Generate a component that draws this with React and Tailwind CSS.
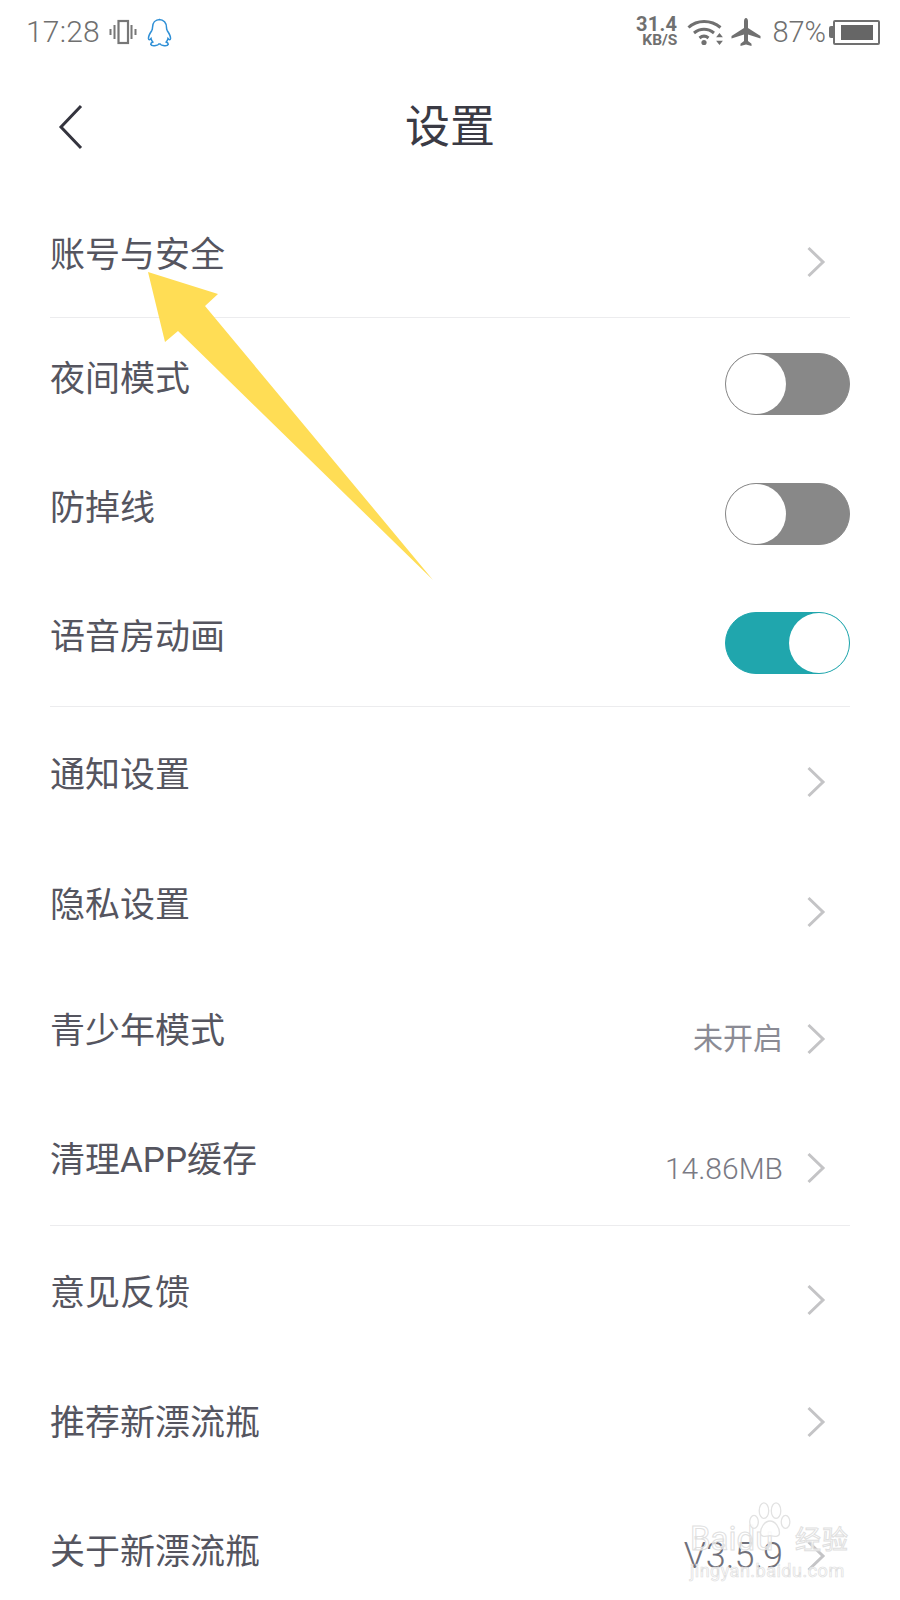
const FONT = "font-['Roboto','Noto_Sans_CJK_SC',sans-serif]";

const Chevron = () => (
  <svg width="20" height="32" viewBox="0 0 20 32" fill="none">
    <path d="M2.500 2 L17 16 L2.500 30" stroke="#c4c4c6" strokeWidth="3" />
  </svg>
);

const Toggle = ({ on }) => (
  <div
    className={
      "flex h-[62px] w-[125px] rounded-full border " +
      (on ? "justify-end bg-[#20a6ad] border-[#20a6ad]" : "justify-start bg-[#888888] border-[#888888]")
    }
  >
    <div className="h-[60px] w-[60px] rounded-full bg-white" />
  </div>
);

const Row = ({
  label,
  value,
  valueClass = "text-[30px] text-[#8b8b94]",
  toggle,
  toggleShift = "mt-[3px]",
  h,
  labelShift = "mb-[2px]",
  chevronShift = "mt-[18px]",
}) => (
  <div className={"flex items-center justify-between " + h}>
    <span className={"text-[35px] leading-none text-[#55555f] " + labelShift}>{label}</span>
    {toggle !== undefined ? (
      <div className={toggleShift}><Toggle on={toggle} /></div>
    ) : (
      <div className={"flex items-center gap-[23px] pr-[24px] " + chevronShift}>
        {value && <span className={valueClass}>{value}</span>}
        <Chevron />
      </div>
    )}
  </div>
);

const Divider = () => <div className="h-[1px] bg-[#ececee]" />;

const StatusBar = () => (
  <div className="flex h-[64px] items-center justify-between pl-[26px] pr-[20px] text-[#707070]">
    <div className="flex items-center">
      <span className="text-[30px] font-light leading-none tracking-[0.2px]">17:28</span>
      {/* vibrate */}
      <svg width="28" height="26" viewBox="0 0 28 26" className="ml-[9px]" fill="none" stroke="#777777">
        <rect x="9.500" y="2" width="9.500" height="22" strokeWidth="2.200" />
        <path d="M5.500 6v14M22.500 6v14" strokeWidth="2" />
        <path d="M1.500 10v6M26.500 10v6" strokeWidth="2" />
      </svg>
      {/* qq */}
      <svg width="26" height="29" viewBox="0 0 26 29" className="ml-[10px]" fill="none" stroke="#2e8fd6" strokeWidth="1.500">
        <path d="M13 1.500c-4.800 0-7.500 3.400-7.500 8 0 1.300-.2 2.200-.8 3.200-1.800 2.600-3.500 5.500-3.200 8 .2 1.300 1.200 1.300 2.500-.2.300 1.500 1 2.700 1.800 3.500-1.500.7-2.300 1.500-2 2.600.4 1.100 3 1.300 5 1 1.500-.2 2.700-1 3-1.600h1.400c.3.600 1.500 1.400 3 1.600 2 .3 4.600.1 5-1 .3-1.100-.5-1.900-2-2.600.8-.8 1.500-2 1.800-3.500 1.300 1.500 2.300 1.500 2.500.2.300-2.500-1.400-5.400-3.200-8-.6-1-.8-1.900-.8-3.200 0-4.600-2.700-8-7.500-8z" />
      </svg>
    </div>
    <div className="flex items-center">
      <div className="flex flex-col items-end font-bold text-[#707070]">
        <span className="text-[20px] leading-[17px] tracking-[0.3px]">31.4</span>
        <span className="text-[15.500px] leading-[15px]">KB/S</span>
      </div>
      {/* wifi */}
      <svg width="37" height="28" viewBox="0 0 37 28" className="ml-[10px]" fill="none" stroke="#707070" strokeWidth="3">
        <path d="M1.500 9.500C10 1.500 24 1.500 33.500 9.500" />
        <path d="M7 15c6-5 14-5 20 0" />
        <path d="M12.500 20c3-2.500 6-2.500 9 0" />
        <circle cx="17" cy="24.500" r="2.600" fill="#707070" stroke="none" />
        <path d="M32.500 15l3.400 4.200h-6.800zM32.500 27l3.400-4.200h-6.800z" fill="#707070" stroke="none" />
      </svg>
      {/* airplane */}
      <svg width="30" height="28" viewBox="0 0 30 28" className="ml-[7px]" fill="#707070">
        <path d="M15 0c1.200 0 2 1.500 2 3.500V10l12.500 8v2.500L17 16.500V23l3.500 2.800V28L15 26.500 9.500 28v-2.200L13 23v-6.500L.5 20.500V18L13 10V3.500C13 1.500 13.800 0 15 0z" />
      </svg>
      <span className="ml-[11px] text-[29px] font-light leading-none">87%</span>
      {/* battery */}
      <div className="ml-[3px] flex items-center">
        <div className="h-[12px] w-[4px] rounded-l-[2px] bg-[#707070]" />
        <div className="flex h-[25px] w-[47px] items-center justify-center rounded-[2px] border-[2.500px] border-[#707070]">
          <div className="h-[15px] w-[32px] bg-[#666666]" />
        </div>
      </div>
    </div>
  </div>
);

const Watermark = () => (
  <div className="absolute bottom-[20px] left-[690px] h-[80px] w-[162px]">
    <span className="absolute left-0 top-[22px] text-[33px] leading-none text-white/70 [-webkit-text-stroke:1px_#e0e0e0]">Baidu</span>
    <svg width="46" height="38" viewBox="0 0 50 44" className="absolute left-[57px] top-[2px]" fill="#ffffff" fillOpacity="0.8" stroke="#e2e2e2" strokeWidth="1.500">
      <ellipse cx="18" cy="10" rx="5.500" ry="9" />
      <ellipse cx="32" cy="10" rx="5.500" ry="9" />
      <ellipse cx="6.500" cy="23" rx="5" ry="7.500" />
      <ellipse cx="43" cy="23" rx="5" ry="7.500" />
      <path d="M25 22c6 0 11 7 11 14 0 5-6 4-11 3-5 1-11 2-11-3 0-7 5-14 11-14z" />
    </svg>
    <span className="absolute left-[105px] top-[27px] text-[26px] leading-none tracking-[1px] text-white/70 [-webkit-text-stroke:1px_#e0e0e0]">经验</span>
    <span className="absolute left-0 top-[62px] text-[18px] leading-none tracking-[0.5px] text-white/70 [-webkit-text-stroke:0.7px_#e0e0e0]">jingyan.baidu.com</span>
  </div>
);

export default function App() {
  return (
    <div className={"relative h-[1600px] w-[900px] overflow-hidden bg-white " + FONT}>
      <StatusBar />

      {/* Title bar */}
      <div className="relative flex h-[124px] items-center justify-center">
        <svg width="26" height="46" viewBox="0 0 26 46" fill="none" className="absolute left-[58px] top-[40px]">
          <path d="M23 2 L3 23 L23 44" stroke="#34343e" strokeWidth="3" />
        </svg>
        <span className="mt-[2px] text-[45px] leading-none text-[#3a3a44]">设置</span>
      </div>

      <div className="px-[50px]">
        <Row label="账号与安全" h="h-[129px]" labelShift="mt-[6px]" />
        <Divider />
        <Row label="夜间模式" toggle={false} h="h-[129px]" labelShift="mb-[6px]" />
        <Row label="防掉线" toggle={false} toggleShift="mt-[5px]" h="h-[129px]" labelShift="mb-[6px]" />
        <Row label="语音房动画" toggle={true} h="h-[130px]" labelShift="mb-[7px]" />
        <Divider />
        <Row label="通知设置" h="h-[136px]" labelShift="mt-[0px]" chevronShift="mt-[14px]" />
        <Row label="隐私设置" h="h-[127px]" chevronShift="mt-[10px]" />
        <Row label="青少年模式" value="未开启" h="h-[127px]" labelShift="mb-[4px]" chevronShift="mt-[10px]" />
        <Row label="清理APP缓存" value="14.86MB" valueClass="text-[30px] font-light text-[#7a7a84]" h="h-[128px]" chevronShift="mt-[14px]" />
        <Divider />
        <Row label="意见反馈" h="h-[134px]" labelShift="mt-[0px]" chevronShift="mt-[14px]" />
        <Row label="推荐新漂流瓶" h="h-[129px]" chevronShift="mt-[-6px]" />
        <Row label="关于新漂流瓶" value="V3.5.9" valueClass="text-[36px] font-light text-[#70707a]" h="h-[129px]" chevronShift="mt-[4px]" />
      </div>

      <Watermark />

      {/* Annotation arrow */}
      <svg width="900" height="1600" viewBox="0 0 900 1600" className="pointer-events-none absolute left-0 top-0">
        <polygon points="148,272 218,294 205,306 433,580 178,331 165,342" fill="#ffdd55" />
      </svg>
    </div>
  );
}
